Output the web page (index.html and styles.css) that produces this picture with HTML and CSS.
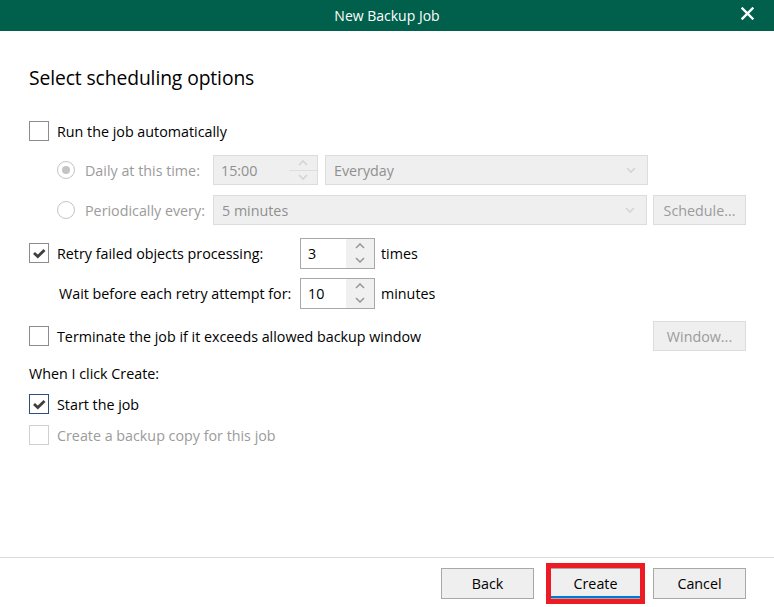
FILE: index.html
```html
<!DOCTYPE html>
<html lang="en">
<head>
    <meta charset="UTF-8">
    <title>New Backup Job</title>
    <link rel="stylesheet" href="styles.css">
</head>
<body>
<div class="dialog">
    <div class="titlebar">
        <span class="title">New Backup Job</span>
        <span class="close">
            <svg width="13" height="13" viewBox="0 0 13 13"><path d="M1.5 1.5 L11.5 11.5 M11.5 1.5 L1.5 11.5" stroke="#fff" stroke-width="2.4" stroke-linecap="square"/></svg>
        </span>
    </div>

    <div class="content">
        <h1>Select scheduling options</h1>

        <div class="row row-auto">
            <span class="check"></span>
            <span class="text">Run the job automatically</span>
        </div>

        <div class="row row-sub row-daily">
            <span class="radio on"></span>
            <span class="label sub-label disabled-text">Daily at this time:</span>
            <div class="spin spin-time disabled">
                <span class="spin-value">15:00</span>
                <span class="spin-btns">
                    <svg width="10" height="6" viewBox="0 0 10 6"><path d="M1 5 L5 1 L9 5" fill="none" stroke="#d4d4d4" stroke-width="1.6"/></svg>
                    <svg width="10" height="6" viewBox="0 0 10 6"><path d="M1 1 L5 5 L9 1" fill="none" stroke="#d4d4d4" stroke-width="1.6"/></svg>
                </span>
            </div>
            <div class="combo combo-day disabled">
                <span>Everyday</span>
                <svg width="10" height="6" viewBox="0 0 10 6"><path d="M1 1 L5 5 L9 1" fill="none" stroke="#d4d4d4" stroke-width="1.6"/></svg>
            </div>
        </div>

        <div class="row row-sub row-period">
            <span class="radio"></span>
            <span class="label sub-label disabled-text">Periodically every:</span>
            <div class="combo combo-period disabled">
                <span>5 minutes</span>
                <svg width="10" height="6" viewBox="0 0 10 6"><path d="M1 1 L5 5 L9 1" fill="none" stroke="#d4d4d4" stroke-width="1.6"/></svg>
            </div>
            <button class="btn btn-disabled" type="button">Schedule...</button>
        </div>

        <div class="row row-retry">
            <span class="check checked">
                <svg width="14" height="11" viewBox="0 0 14 11"><path d="M2 5 L5.8 8.6 L12.5 2" fill="none" stroke="#3f3f3f" stroke-width="2.8"/></svg>
            </span>
            <span class="label retry-label">Retry failed objects processing:</span>
            <div class="spin spin-num">
                <span class="spin-value">3</span>
                <span class="spin-btns">
                    <svg width="10" height="6" viewBox="0 0 10 6"><path d="M1 5 L5 1 L9 5" fill="none" stroke="#9a9a9a" stroke-width="1.6"/></svg>
                    <svg width="10" height="6" viewBox="0 0 10 6"><path d="M1 1 L5 5 L9 1" fill="none" stroke="#9a9a9a" stroke-width="1.6"/></svg>
                </span>
            </div>
            <span class="unit">times</span>
        </div>

        <div class="row row-wait">
            <span class="label wait-label">Wait before each retry attempt for:</span>
            <div class="spin spin-num">
                <span class="spin-value">10</span>
                <span class="spin-btns">
                    <svg width="10" height="6" viewBox="0 0 10 6"><path d="M1 5 L5 1 L9 5" fill="none" stroke="#9a9a9a" stroke-width="1.6"/></svg>
                    <svg width="10" height="6" viewBox="0 0 10 6"><path d="M1 1 L5 5 L9 1" fill="none" stroke="#9a9a9a" stroke-width="1.6"/></svg>
                </span>
            </div>
            <span class="unit">minutes</span>
        </div>

        <div class="row row-terminate">
            <span class="check"></span>
            <span class="text">Terminate the job if it exceeds allowed backup window</span>
            <button class="btn btn-disabled btn-right" type="button">Window...</button>
        </div>

        <div class="row row-when">
            <span class="text">When I click Create:</span>
        </div>

        <div class="row row-start">
            <span class="check checked focus">
                <svg width="14" height="11" viewBox="0 0 14 11"><path d="M2 5 L5.8 8.6 L12.5 2" fill="none" stroke="#3f3f3f" stroke-width="2.8"/></svg>
            </span>
            <span class="text">Start the job</span>
        </div>

        <div class="row row-copy">
            <span class="check check-disabled"></span>
            <span class="text disabled-text">Create a backup copy for this job</span>
        </div>
    </div>

    <div class="footer">
        <button class="btn" type="button">Back</button>
        <span class="highlight">
            <button class="btn btn-default" type="button">Create</button>
        </span>
        <button class="btn" type="button">Cancel</button>
    </div>
</div>
</body>
</html>
```

FILE: styles.css
```css
body {
    margin: 0;
    padding: 0;
    background-color: #fff;
    font-family: "Open Sans", "Noto Sans", sans-serif;
    font-size: 14.3px;
    color: #000;
}

.dialog {
    width: 774px;
    height: 607px;
    display: flex;
    flex-direction: column;
    background-color: #fff;
    overflow: hidden;
}

/* title bar */
.titlebar {
    height: 31px;
    flex: none;
    background-color: #00604b;
    color: #fff;
    display: flex;
    align-items: center;
    justify-content: center;
    position: relative;
}

.title {
    font-size: 14px;
}

.close {
    position: absolute;
    right: 20px;
    top: 7px;
    width: 13px;
    height: 13px;
    display: flex;
}

/* main area */
.content {
    flex: 1;
    padding: 0 28px 0 29px;
}

h1 {
    margin: 32px 0 0 0;
    height: 30px;
    line-height: 30px;
    font-size: 19.3px;
    font-weight: normal;
    letter-spacing: -0.1px;
}

.row {
    display: flex;
    align-items: center;
    height: 30px;
}

.row-auto { margin-top: 23px; }
.row-daily { margin-top: 9px; }
.row-period { margin-top: 10px; }
.row-retry { margin-top: 13px; }
.row-wait { margin-top: 10px; }
.row-terminate { margin-top: 13px; }
.row-when { margin-top: 12px; height: 20px; }
.row-start { margin-top: 11px; height: 20px; }
.row-copy { margin-top: 11px; height: 20px; }

.row-sub {
    padding-left: 28px;
}

.row-wait {
    padding-left: 30px;
}

.text {
    margin-left: 8px;
}

.row-when .text {
    margin-left: 0;
}

.disabled-text {
    color: #9b9b9b;
}

/* checkboxes and radios */
.check {
    width: 18px;
    height: 18px;
    border: 1px solid #8c8c8c;
    background-color: #fff;
    flex: none;
    display: flex;
    align-items: center;
    justify-content: center;
}

.check.focus {
    border-color: #2c4f7c;
}

.check-disabled {
    border-color: #d0d0d0;
}

.radio {
    width: 16px;
    height: 16px;
    border: 1px solid #c4c4c4;
    border-radius: 50%;
    background-color: #fff;
    flex: none;
    display: flex;
    align-items: center;
    justify-content: center;
}

.radio.on::after {
    content: "";
    width: 8px;
    height: 8px;
    border-radius: 50%;
    background-color: #c4c4c4;
}

.label {
    flex: none;
}

.sub-label {
    margin-left: 10px;
    width: 128px;
}

.retry-label {
    margin-left: 8px;
    width: 243px;
}

.wait-label {
    width: 241px;
}

.unit {
    margin-left: 6px;
}

/* spin boxes and combos */
.spin {
    border: 1px solid #a8a8a8;
    background-color: #fff;
    display: flex;
    box-sizing: border-box;
    height: 31px;
    flex: none;
}

.spin-value {
    flex: 1;
    padding-left: 7px;
    line-height: 29px;
}

.spin-btns {
    width: 28px;
    background-color: #f0f0f0;
    display: flex;
    flex-direction: column;
    align-items: center;
    justify-content: space-around;
}

.spin-time {
    width: 105px;
    height: 30px;
}

.spin-num {
    width: 75px;
}

.spin.disabled {
    border-color: #dcdcdc;
    background-color: #efefef;
    color: #8f8f8f;
}

.spin.disabled .spin-btns {
    background-color: #efefef;
    background-image: linear-gradient(#dedede, #dedede);
    background-size: 100% 1px;
    background-position: center;
    background-repeat: no-repeat;
}

.combo {
    height: 30px;
    box-sizing: border-box;
    border: 1px solid #dcdcdc;
    background-color: #efefef;
    color: #8f8f8f;
    display: flex;
    align-items: center;
    justify-content: space-between;
    padding: 0 11px 0 8px;
    flex: none;
}

.combo-day {
    width: 323px;
    margin-left: 7px;
}

.combo-period {
    width: 434px;
}

/* buttons */
.btn {
    width: 93px;
    height: 31px;
    box-sizing: border-box;
    border: 1px solid #a8a8a8;
    background-color: #efefef;
    font-family: "Open Sans", "Noto Sans", sans-serif;
    font-size: 14.3px;
    color: #000;
    padding: 0;
    flex: none;
}

.btn-disabled {
    border-color: #dcdcdc;
    color: #9b9b9b;
    height: 30px;
}

.row-period .btn {
    margin-left: 6px;
}

.btn-right {
    margin-left: auto;
}

.btn-default {
    box-shadow: inset 0 -3px 0 #efefef, inset 0 -5px 0 #0078d7;
    box-shadow: inset 0 -2px 0 #0078d7;
}

.footer {
    flex: none;
    border-top: 1px solid #dadada;
    display: flex;
    justify-content: flex-end;
    align-items: flex-start;
    padding: 10px 28px 0 0;
    box-sizing: border-box;
    height: 50px;
}

.footer .btn + .highlight {
    margin-left: 15px;
}

.footer .highlight + .btn {
    margin-left: 11px;
}

/* red annotation frame around the Create button */
.highlight {
    position: relative;
    display: flex;
}

.highlight::after {
    content: "";
    position: absolute;
    left: -3px;
    top: -5px;
    right: -3px;
    bottom: -5px;
    border: 5px solid #ed1c24;
}
```
